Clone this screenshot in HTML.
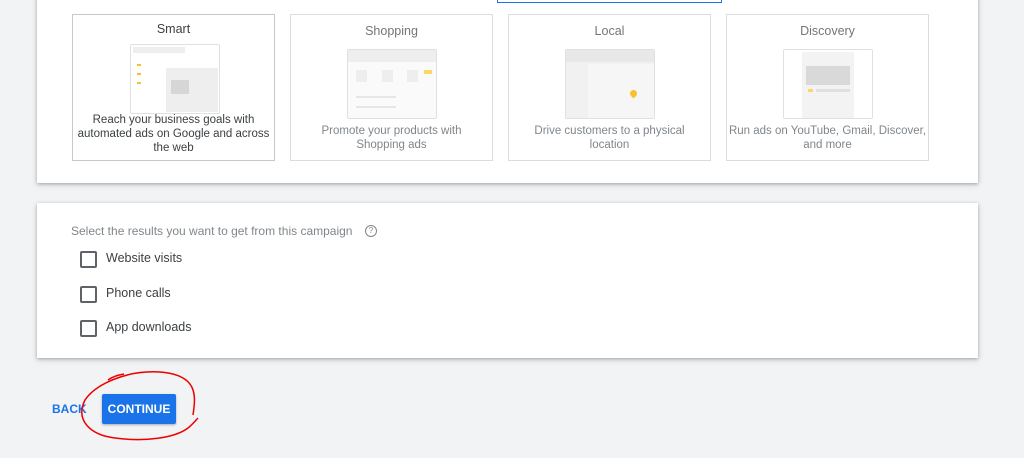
<!DOCTYPE html>
<html><head><style>
body{margin:0;width:1024px;height:458px;background:#f1f3f4;font-family:"Liberation Sans",Arial,sans-serif;position:relative;overflow:hidden}
.card{position:absolute;background:#fff;box-shadow:0 1px 3px rgba(60,64,67,.35),0 2px 6px rgba(60,64,67,.15)}
.opt{position:absolute;top:14px;width:203px;height:147px;border:1px solid #dadce0;box-sizing:border-box;text-align:center;color:#80868b;font-size:11.5px;line-height:14px}
.opt .t{font-size:12.5px;margin-top:9px;color:#757575}
.opt .d{position:absolute;left:22px;right:22px;top:109px}
.img{position:absolute;left:56px;top:34px;width:88px;height:68px;border:1px solid #e0e0e0;border-radius:2px;background:#fafafa}
.cb{position:absolute;left:80px;width:13px;height:13px;border:2px solid #5f6368;border-radius:2px}
.lb{position:absolute;left:106px;font-size:12.5px;color:#3c4043}
</style></head><body>
<div class="card" style="left:37px;top:-5px;width:941px;height:188px"></div>
<div style="position:absolute;left:497px;top:0;width:223px;height:2px;border:1px solid #1a73e8;border-top:none"></div>
<div class="opt" style="left:72px;border-color:#c8c8c8;color:#3c4043"><div class="t" style="color:#3c4043;margin-top:7px">Smart</div>
<div class="img" style="top:29px;left:57px;background:#fff"><div style="position:absolute;left:2px;top:2px;width:52px;height:6px;background:#eee"></div>
<div style="position:absolute;left:6px;top:19px;width:4px;height:2px;background:#fbc02d"></div><div style="position:absolute;left:6px;top:28px;width:4px;height:2px;background:#fbc02d"></div><div style="position:absolute;left:6px;top:37px;width:4px;height:2px;background:#fbc02d"></div>
<div style="position:absolute;left:35px;top:23px;width:52px;height:44px;background:#eee"></div><div style="position:absolute;left:40px;top:35px;width:18px;height:14px;background:#d6d6d6"></div></div>
<div class="d" style="top:98px;left:2px;right:2px;color:#3c4043">Reach your business goals with automated ads on Google and across the web</div></div>
<div class="opt" style="left:290px"><div class="t">Shopping</div><div class="img" style="top:34px"><div style="position:absolute;left:0;top:0;right:0;height:12px;background:#eee"></div><div style="position:absolute;left:8px;top:20px;width:11px;height:12px;background:#eee"></div><div style="position:absolute;left:34px;top:20px;width:11px;height:12px;background:#eee"></div><div style="position:absolute;left:59px;top:20px;width:11px;height:12px;background:#eee"></div><div style="position:absolute;left:76px;top:20px;width:8px;height:4px;background:#fdd663"></div><div style="position:absolute;left:8px;top:46px;width:40px;height:2px;background:#e6e6e6"></div><div style="position:absolute;left:8px;top:56px;width:40px;height:2px;background:#e6e6e6"></div></div>
<div class="d">Promote your products with Shopping ads</div></div>
<div class="opt" style="left:508px"><div class="t">Local</div><div class="img" style="top:34px;background:#f1f1f1"><div style="position:absolute;left:0;top:0;right:0;height:12px;background:#e8e8e8"></div><div style="position:absolute;left:22px;top:14px;width:66px;height:54px;background:#f6f6f6"></div><div style="position:absolute;left:64px;top:40px;width:7px;height:7px;border-radius:50% 50% 50% 0;transform:rotate(-45deg);background:#fbc02d"></div></div>
<div class="d">Drive customers to a physical location</div></div>
<div class="opt" style="left:726px"><div class="t">Discovery</div><div class="img" style="top:34px;background:#fff"><div style="position:absolute;left:18px;top:2px;width:52px;height:66px;background:#f3f3f3"></div><div style="position:absolute;left:22px;top:16px;width:44px;height:19px;background:#d9d9d9"></div><div style="position:absolute;left:24px;top:39px;width:5px;height:3px;background:#fdd663"></div><div style="position:absolute;left:32px;top:39px;width:34px;height:3px;background:#e0e0e0"></div></div>
<div class="d" style="left:-2px;right:-2px;white-space:nowrap">Run ads on YouTube, Gmail, Discover,<br>and more</div></div>

<div class="card" style="left:37px;top:203px;width:941px;height:155px"></div>
<div style="position:absolute;left:71px;top:224px;font-size:12px;color:#80868b">Select the results you want to get from this campaign</div>
<div style="position:absolute;left:365px;top:225px;width:10px;height:10px;border:1px solid #80868b;border-radius:50%;font-size:8px;line-height:10px;text-align:center;color:#80868b">?</div>
<div class="cb" style="top:251px"></div><div class="lb" style="top:251px">Website visits</div>
<div class="cb" style="top:286px"></div><div class="lb" style="top:286px">Phone calls</div>
<div class="cb" style="top:320px"></div><div class="lb" style="top:320px">App downloads</div>

<div style="position:absolute;left:52px;top:402px;font-size:12px;font-weight:bold;color:#1a73e8">BACK</div>
<div style="position:absolute;left:102px;top:394px;width:74px;height:30px;background:#1a73e8;border-radius:2px;box-shadow:0 1px 2px rgba(0,0,0,.3);color:#fff;font-size:12px;font-weight:bold;text-align:center;line-height:30px">CONTINUE</div>
<svg style="position:absolute;left:0;top:0" width="1024" height="458"><path d="M193 415 C196 395 198 375 160 372 C125 370 95 385 85 400 C75 420 90 435 115 438 C145 442 175 438 188 428 C193 424 196 420 198 418 M108 380 C112 377 118 375 124 374" fill="none" stroke="#e00" stroke-width="1.5"/></svg>
</body></html>
